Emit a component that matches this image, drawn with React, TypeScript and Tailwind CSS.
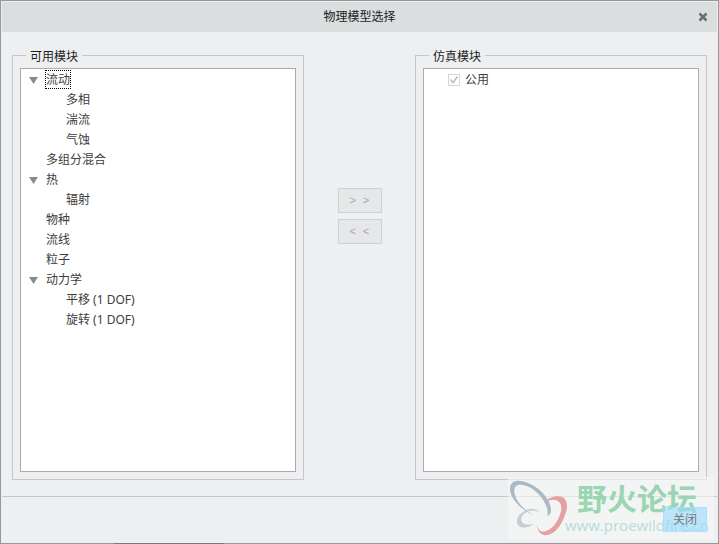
import { useState } from "react";

interface TreeNode {
  name: string;
  children?: string[];
}

interface GroupProps {
  label: string;
  children: React.ReactNode;
}

const modules: TreeNode[] = [
  { name: "流动", children: ["多相", "湍流", "气蚀"] },
  { name: "多组分混合" },
  { name: "热", children: ["辐射"] },
  { name: "物种" },
  { name: "流线" },
  { name: "粒子" },
  { name: "动力学", children: ["平移 (1 DOF)", "旋转 (1 DOF)"] },
];

const Group: React.FC<GroupProps> = ({ label, children }) => (
  <fieldset className="flex min-w-0 flex-col border border-[#c5c7c9] px-[7px] pt-px pb-[7px]">
    <legend className="ml-1.5 h-6 px-1 pt-1 leading-5 text-[#1c1c1c]">
      {label}
    </legend>
    <div className="h-full min-h-[404px] border border-[#a9abae] bg-white">
      {children}
    </div>
  </fieldset>
);

const ModuleTree = () => {
  const [closed, setClosed] = useState<string[]>([]);
  const [selected, setSelected] = useState<string>("流动");

  const toggle = (name: string) =>
    setClosed(
      closed.includes(name)
        ? closed.filter((item) => item !== name)
        : [...closed, name]
    );

  const getLabel = (name: string) => (
    <button
      type="button"
      className={`h-[19px] border border-dotted leading-4 outline-none ${
        selected === name ? "border-black" : "border-transparent"
      }`}
      onClick={() => setSelected(name)}
    >
      {name}
    </button>
  );

  return (
    <ul className="pt-px">
      {modules.map(({ name, children }) => (
        <li key={name}>
          <div className="flex h-5 items-start pl-2">
            <div className="flex h-5 w-4 items-center">
              {children && (
                <button
                  type="button"
                  aria-label={name}
                  onClick={() => toggle(name)}
                >
                  <svg width="9" height="7" viewBox="0 0 9 7">
                    <path d="M0 0h9L4.500 7z" fill="#8a8a8a" />
                  </svg>
                </button>
              )}
            </div>
            {getLabel(name)}
          </div>
          {children && !closed.includes(name) && (
            <ul>
              {children.map((child) => (
                <li className="flex h-5 items-start pl-11" key={child}>
                  {getLabel(child)}
                </li>
              ))}
            </ul>
          )}
        </li>
      ))}
    </ul>
  );
};

const Watermark = () => (
  <div className="pointer-events-none absolute right-1 bottom-1 h-[62px] w-[206px] bg-[#f5f8f6]/60">
    <svg
      className="absolute top-0 left-0"
      width="62"
      height="62"
      viewBox="0 0 62 62"
    >
      <path
        fill="#a9bac7"
        d="M25 38C12 32 2 21 2 12C2 6 6 3 12 4C26 5 43 20 43 33C43 36 42 38 39 39C43 29 28 9 14 8C7 7 5 12 7 18C9 26 17 33 25 38Z"
      />
      <path
        fill="#e5a0a2"
        d="M36 26C40 21 48 18 54 20C59 22 60 29 58 35C55 46 48 57 39 58C33 59 29 54 29 47C30 53 33 56 38 54C45 52 51 43 53 34C55 24 47 19 36 26Z"
      />
      <path
        fill="#c3cdd4"
        d="M32 36C28 30 20 31 15 35C9 39 7 45 11 49C15 52 22 50 26 47C21 48 16 48 14 45C11 41 16 36 21 34C25 33 29 33 32 36Z"
      />
    </svg>
    <div className="absolute top-0 left-[69px] font-['Noto_Sans_CJK_SC',sans-serif] text-[30px] leading-10 font-bold whitespace-nowrap text-[#9bd5b3]">
      野火论坛
    </div>
    <div className="absolute top-9 left-[57px] font-['Open_Sans',sans-serif] text-[15px] leading-6 whitespace-nowrap text-[#b8dcdc]">
      www.proewildfire.cn
    </div>
  </div>
);

const App = () => {
  const moveButton =
    "h-[25px] w-11 border border-[#d0d1d3] bg-[#e6e7e9] pt-0.5 font-['Liberation_Mono',monospace] text-[11px] text-[#a6a6a6]";

  return (
    <div className="relative flex min-h-screen flex-col border border-[#96979a] bg-[#eeeff1] p-px font-['Noto_Sans','Noto_Sans_CJK_SC',sans-serif] text-[12px] text-[#3c3c3c]">
      <header className="grid h-[30px] grid-cols-[1fr_auto_1fr] items-center bg-[#dadedf] px-[9px]">
        <h1 className="col-start-2 text-[#1c1c1c]">物理模型选择</h1>
        <button type="button" aria-label="关闭窗口" className="justify-self-end">
          <svg width="10" height="10" viewBox="0 0 10 10">
            <path d="M1.500 1.500l7 7M8.500 1.500l-7 7" stroke="#6c6d6f" strokeWidth="2.500" />
          </svg>
        </button>
      </header>

      <main className="grid flex-1 grid-cols-[1fr_111px_1fr] px-[10px] pt-[11px] pb-4">
        <Group label="可用模块">
          <ModuleTree />
        </Group>
        <div className="flex flex-col items-center gap-1.5 pt-[145px]">
          <button type="button" disabled className={moveButton}>
            &gt; &gt;
          </button>
          <button type="button" disabled className={moveButton}>
            &lt; &lt;
          </button>
        </div>
        <Group label="仿真模块">
          <label className="flex h-5 items-center gap-[5px] pt-px pl-6">
            <span className="grid">
              <input
                type="checkbox"
                checked
                readOnly
                disabled
                className="col-start-1 row-start-1 size-3 appearance-none border border-[#d6d6d6] bg-white"
              />
              <svg
                className="col-start-1 row-start-1"
                width="12"
                height="12"
                viewBox="0 0 12 12"
              >
                <path
                  d="M2.500 5.500l2.500 3 4.500-6"
                  fill="none"
                  stroke="#c2c2c2"
                  strokeWidth="1.800"
                />
              </svg>
            </span>
            公用
          </label>
        </Group>
      </main>

      <footer className="flex h-[46px] justify-end border-t border-[#c5c7c9] px-[10px] pt-[10px]">
        <button
          type="button"
          className="z-10 h-[25px] w-11 border border-[#a8dffc]/70 bg-[#98daff]/60 text-[#77797b]"
        >
          关闭
        </button>
      </footer>
      <Watermark />
      <div className="absolute -bottom-px left-[113px] h-px w-[110px] bg-[#767985]" />
    </div>
  );
};

export default App;
